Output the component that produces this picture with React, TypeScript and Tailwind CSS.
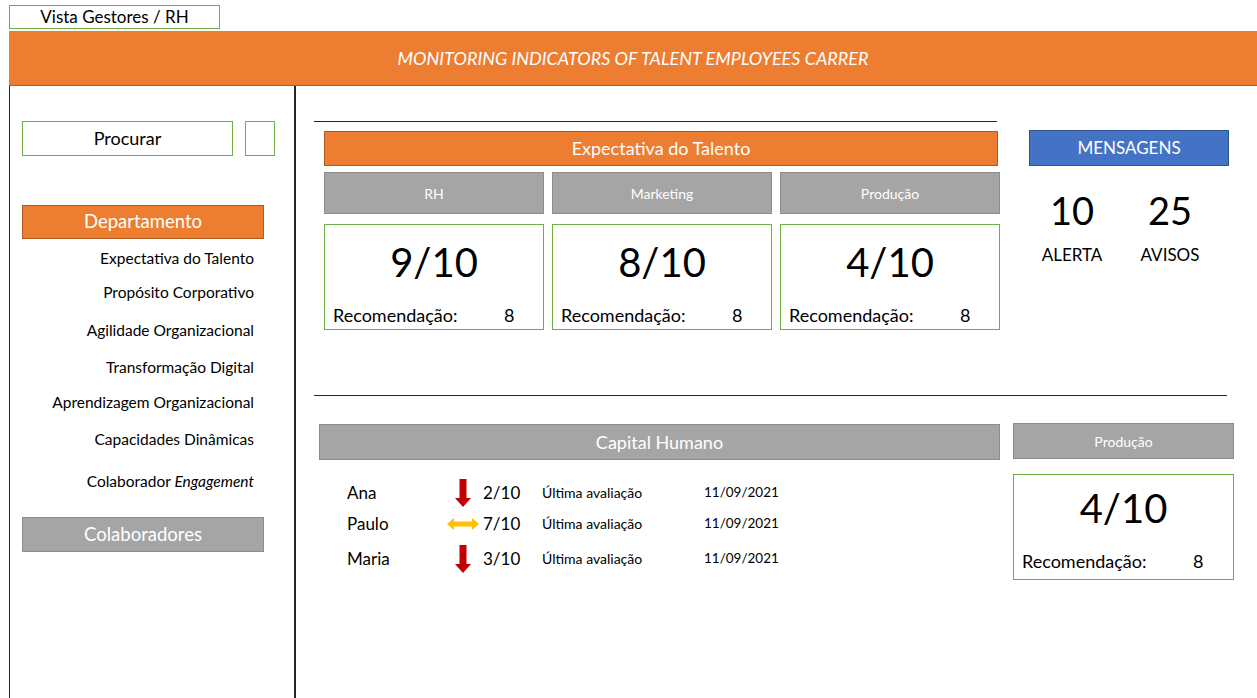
import React from "react";

type Score = { area: string; value: string; rec: number };

const areas: Score[] = [
  { area: "RH", value: "9/10", rec: 8 },
  { area: "Marketing", value: "8/10", rec: 8 },
  { area: "Produção", value: "4/10", rec: 8 },
];

// label + top margin for each sidebar entry
const menu: [string, string][] = [
  ["Expectativa do Talento", ""],
  ["Propósito Corporativo", "mt-[14px]"],
  ["Agilidade Organizacional", "mt-[18px]"],
  ["Transformação Digital", "mt-[17px]"],
  ["Aprendizagem Organizacional", "mt-[15px]"],
  ["Capacidades Dinâmicas", "mt-[17px]"],
];

const people = [
  { name: "Ana", trend: "down", score: "2/10", date: "11/09/2021" },
  { name: "Paulo", trend: "flat", score: "7/10", date: "11/09/2021" },
  { name: "Maria", trend: "down", score: "3/10", date: "11/09/2021" },
];

function ArrowDown() {
  return (
    <svg width="16" height="28" viewBox="0 0 16 28">
      <path d="M4.5 0 H11.5 V19 H16 L8 28 L0 19 H4.5 Z" fill="#c00000" />
    </svg>
  );
}

function ArrowBoth() {
  return (
    <svg width="32" height="12" viewBox="0 0 32 12">
      <path
        d="M0 6 L7 0 V3.5 H25 V0 L32 6 L25 12 V8.5 H7 V12 Z"
        fill="#ffc000"
      />
    </svg>
  );
}

function ScoreCard({
  value,
  rec,
  top = "mt-[8px]",
  bottom = "mb-[3px]",
}: {
  value: string;
  rec: number;
  top?: string;
  bottom?: string;
}) {
  return (
    <div className="flex h-[106px] flex-col border border-[#70ad47] bg-white">
      <div className={"text-center text-[40px] leading-[58px] text-black " + top}>
        {value}
      </div>
      <div className={"mt-auto flex pl-[8px] text-[18px] leading-[22px] " + bottom}>
        <span className="w-[171px]">Recomendação:</span>
        <span>{rec}</span>
      </div>
    </div>
  );
}

function GrayBar({
  children,
  className,
}: {
  children: React.ReactNode;
  className?: string;
}) {
  return (
    <div
      className={
        "flex items-center justify-center border border-[#8c8c8c] bg-[#a5a5a5] text-white " +
        (className ?? "")
      }
    >
      {children}
    </div>
  );
}

export default function App() {
  return (
    <div
      className="h-[698px] w-[1257px] overflow-hidden bg-white text-black"
      style={{ fontFamily: "Lato, 'Open Sans', sans-serif" }}
    >
      <div className="ml-[9px] mt-[5px] flex h-[24px] w-[211px] items-center justify-center border border-[#70ad47] text-[17px]">
        Vista Gestores / RH
      </div>

      <div className="ml-[9px] mt-[2px] flex h-[55px] items-center justify-center border-b border-[#ae5a21] bg-[#ed7d31] text-[18px] italic text-white">
        MONITORING INDICATORS OF TALENT EMPLOYEES CARRER
      </div>

      <div className="ml-[9px] flex h-[613px] border-l border-[#262626]">
        {/* sidebar */}
        <aside className="w-[286px] border-r-2 border-[#262626] pl-[12px] pt-[35px]">
          <div className="flex gap-[12px]">
            <div className="flex h-[35px] w-[211px] items-center justify-center border border-[#70ad47] text-[18px]">
              Procurar
            </div>
            <div className="h-[35px] w-[30px] border border-[#70ad47]" />
          </div>

          <div className="mt-[49px] flex h-[34px] w-[242px] items-center justify-center border border-[#ae5a21] bg-[#ed7d31] text-[18.5px] text-white">
            Departamento
          </div>

          <ul className="mt-[9px] w-[232px] text-right text-[15.5px] leading-[20px]">
            {menu.map(([m, gap]) => (
              <li key={m} className={gap}>
                {m}
              </li>
            ))}
            <li className="mt-[22px]">
              Colaborador <em>Engagement</em>
            </li>
          </ul>

          <GrayBar className="mt-[26px] h-[35px] w-[242px] text-[18.5px]">
            Colaboradores
          </GrayBar>
        </aside>

        {/* main */}
        <main className="flex-1 pl-[18px] pt-[35px]">
          <div className="flex">
            <div className="w-[693px]">
              <div className="w-[683px] border-t border-[#262626]" />
              <div className="ml-[10px] mt-[9px] flex h-[35px] w-[674px] items-center justify-center border border-[#ae5a21] bg-[#ed7d31] text-[18px] text-white">
                Expectativa do Talento
              </div>
              <div className="ml-[10px] mt-[6px] grid w-[676px] grid-cols-3 gap-x-[8px]">
                {areas.map((a) => (
                  <GrayBar key={a.area} className="h-[42px] text-[14px]">
                    {a.area}
                  </GrayBar>
                ))}
              </div>
              <div className="ml-[10px] mt-[10px] grid w-[676px] grid-cols-3 gap-x-[8px]">
                {areas.map((a) => (
                  <ScoreCard key={a.area} value={a.value} rec={a.rec} />
                ))}
              </div>
            </div>

            <div className="ml-[22px] mt-[9px] w-[200px]">
              <div className="flex h-[36px] items-center justify-center border border-[#2f528f] bg-[#4472c4] text-[17px] text-white">
                MENSAGENS
              </div>
              <div className="mt-[20px] flex text-center">
                <div className="w-[86px]">
                  <div className="text-[38px] leading-[48px]">10</div>
                  <div className="mt-[8px] text-[17px]">ALERTA</div>
                </div>
                <div className="ml-[12px] w-[86px]">
                  <div className="text-[38px] leading-[48px]">25</div>
                  <div className="mt-[8px] text-[17px]">AVISOS</div>
                </div>
              </div>
            </div>
          </div>

          <div className="mt-[65px] w-[913px] border-t border-[#262626]" />

          <div className="mt-[27px] flex items-start">
            <div className="ml-[5px] mt-[1px] w-[681px]">
              <GrayBar className="h-[36px] text-[18px]">Capital Humano</GrayBar>
              <div className="mt-[17px] flex flex-col">
                {people.map((p, i) => (
                  <div
                    key={p.name}
                    className={
                      "flex h-[31px] items-center " +
                      (i === 2 ? "mt-[4px]" : "")
                    }
                  >
                    <span className="w-[124px] pl-[28px] text-[17px]">
                      {p.name}
                    </span>
                    <span className="flex w-[40px] justify-center">
                      {p.trend === "down" ? <ArrowDown /> : <ArrowBoth />}
                    </span>
                    <span className="w-[59px] text-[17px]">{p.score}</span>
                    <span className="w-[162px] text-[14px]">
                      Última avaliação
                    </span>
                    <span className="text-[13.5px]">{p.date}</span>
                  </div>
                ))}
              </div>
            </div>

            <div className="ml-[13px] w-[221px]">
              <GrayBar className="h-[36px] text-[14px]">Produção</GrayBar>
              <div className="mt-[15px]">
                <ScoreCard
                  value="4/10"
                  rec={8}
                  top="mt-[4px]"
                  bottom="mb-[7px]"
                />
              </div>
            </div>
          </div>
        </main>
      </div>
    </div>
  );
}
